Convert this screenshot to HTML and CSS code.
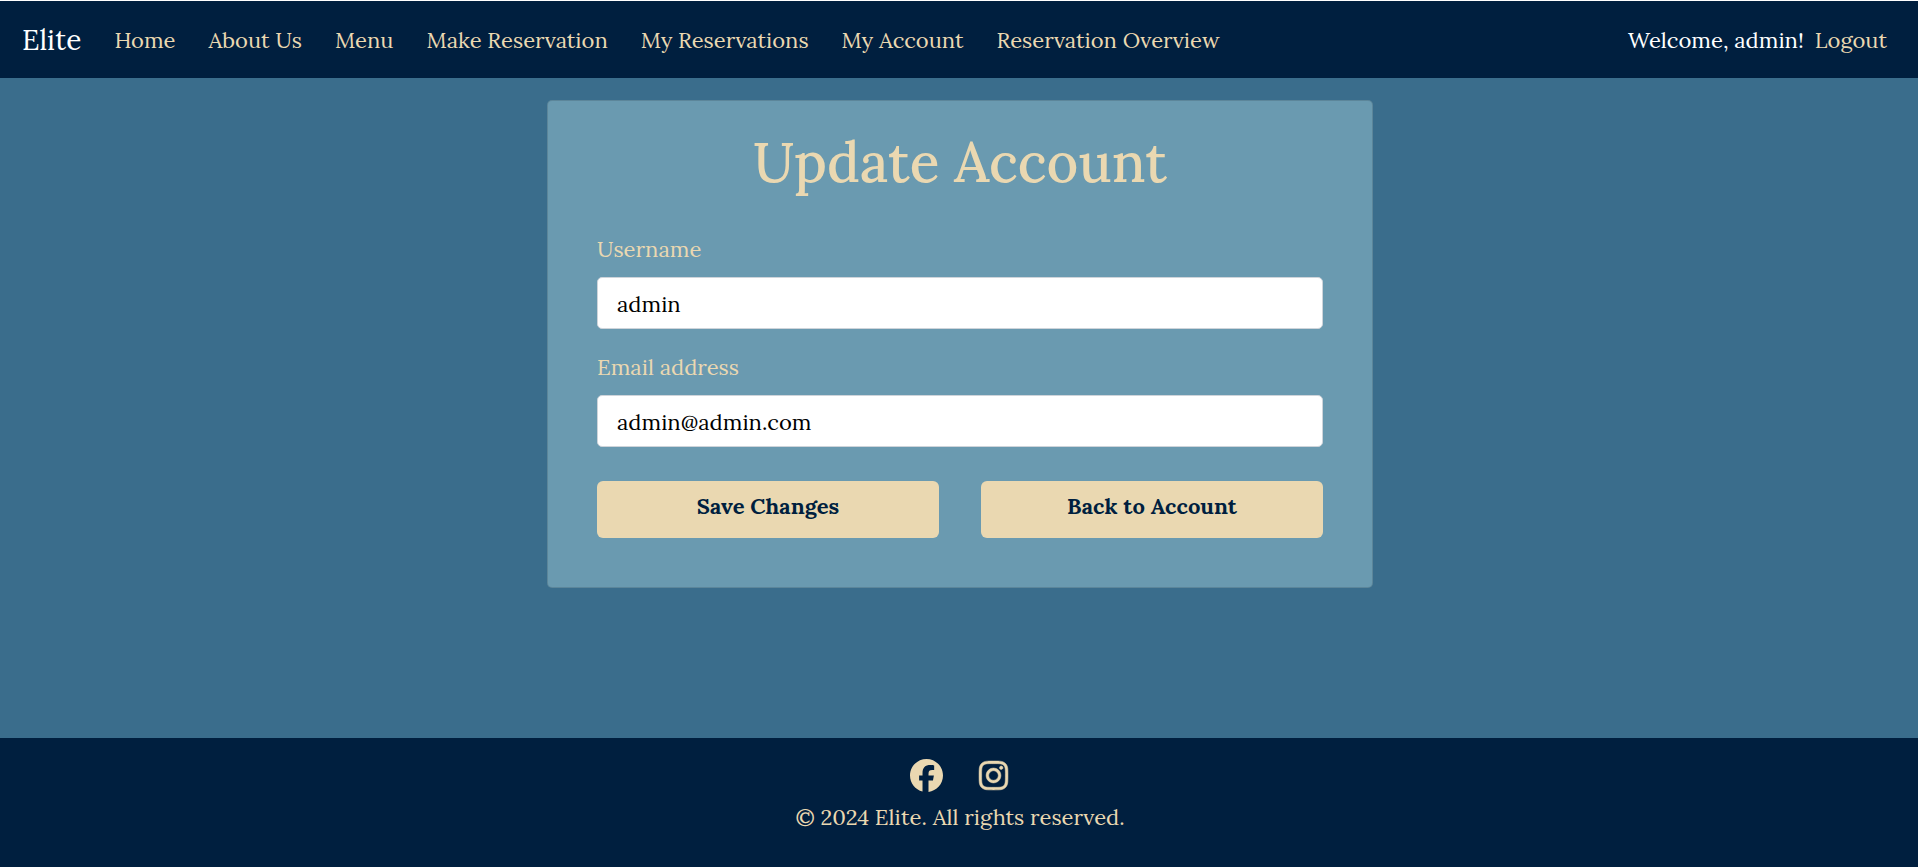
FILE: index.html
```html
<!DOCTYPE html>
<html lang="en">
<head>
<meta charset="utf-8">
<meta name="viewport" content="width=device-width, initial-scale=1">
<title>Elite - Update Account</title>
<link rel="stylesheet" href="styles.css">
</head>
<body>
<header class="navbar">
  <a class="brand" href="#">Elite</a>
  <nav class="nav-links">
    <a href="#">Home</a>
    <a href="#">About Us</a>
    <a href="#">Menu</a>
    <a href="#">Make Reservation</a>
    <a href="#">My Reservations</a>
    <a href="#">My Account</a>
    <a href="#">Reservation Overview</a>
  </nav>
  <div class="session">
    <span class="welcome">Welcome, admin!</span>
    <a href="#">Logout</a>
  </div>
</header>

<main class="main">
  <section class="card">
    <h1 class="card-title">Update Account</h1>
    <form class="form">
      <div class="field">
        <label for="username">Username</label>
        <input id="username" type="text" value="admin">
      </div>
      <div class="field">
        <label for="email">Email address</label>
        <input id="email" type="email" value="admin@admin.com">
      </div>
      <div class="actions">
        <button class="btn" type="submit">Save Changes</button>
        <a class="btn" href="#">Back to Account</a>
      </div>
    </form>
  </section>
</main>

<footer class="footer">
  <div class="social">
    <a href="#" aria-label="Facebook">
      <svg class="icon" viewBox="0 0 512 512" aria-hidden="true"><path d="M512 256C512 114.6 397.4 0 256 0S0 114.6 0 256C0 376 82.7 476.8 194.2 504.5V334.2H141.4V256h52.8V222.3c0-87.1 39.4-127.5 125-127.5c16.2 0 44.2 3.2 55.7 6.4V172c-6-.6-16.5-1-29.6-1c-42 0-58.2 15.9-58.2 57.2V256h83.6l-14.4 78.2H287V510.1C413.8 494.8 512 386.9 512 256z"/></svg>
    </a>
    <a href="#" aria-label="Instagram">
      <svg class="icon" viewBox="-32 0 512 512" aria-hidden="true"><path stroke="currentColor" stroke-width="8" d="M224.1 141c-63.6 0-114.9 51.3-114.9 114.9s51.3 114.9 114.9 114.9S339 319.5 339 255.9 287.7 141 224.1 141zm0 189.6c-41.1 0-74.7-33.5-74.7-74.7s33.5-74.7 74.7-74.7 74.7 33.5 74.7 74.7-33.6 74.7-74.7 74.7zm146.4-194.3c0 14.9-12 26.8-26.8 26.8-14.9 0-26.8-12-26.8-26.8s12-26.8 26.8-26.8 26.8 12 26.8 26.8zm76.1 27.2c-1.7-35.9-9.9-67.7-36.2-93.9-26.2-26.2-58-34.4-93.9-36.2-37-2.1-147.9-2.1-184.9 0-35.8 1.7-67.6 9.900-93.900 36.100s-34.400 58-36.200 93.900c-2.100 37-2.100 147.900 0 184.900 1.700 35.900 9.900 67.700 36.200 93.900s58 34.400 93.900 36.200c37 2.100 147.900 2.100 184.900 0 35.900-1.700 67.700-9.900 93.900-36.200 26.200-26.200 34.400-58 36.200-93.900 2.100-37 2.100-147.800 0-184.800zM398.800 388c-7.800 19.600-22.900 34.700-42.600 42.600-29.500 11.700-99.500 9-132.100 9s-102.700 2.600-132.100-9c-19.600-7.800-34.700-22.900-42.600-42.600-11.700-29.500-9-99.500-9-132.100s-2.600-102.700 9-132.100c7.800-19.600 22.900-34.700 42.600-42.600 29.500-11.700 99.500-9 132.100-9s102.700-2.600 132.100 9c19.600 7.800 34.700 22.900 42.600 42.600 11.700 29.500 9 99.500 9 132.100s2.700 102.700-9 132.100z"/></svg>
    </a>
  </div>
  <p class="copyright">© 2024 Elite. All rights reserved.</p>
</footer>
</body>
</html>
```
FILE: styles.css
```css
:root {
  --navy: #001f3f;
  --blue: #3a6d8c;
  --light-blue: #6a9ab0;
  --cream: #ead8b1;
}

*,
*::before,
*::after {
  box-sizing: border-box;
}

body {
  margin: 0;
  min-height: 100vh;
  display: flex;
  flex-direction: column;
  border-top: 1px solid #fff;
  background: var(--blue);
  color: var(--cream);
  font-family: Lora, "Liberation Serif", serif;
  font-size: 22px;
  line-height: 34px;
}

a {
  color: inherit;
  text-decoration: none;
}

.navbar {
  display: flex;
  flex-wrap: wrap;
  align-items: center;
  gap: 0 33px;
  min-height: 77px;
  padding: 0 31px 0 22px;
  background: var(--navy);
}

.brand {
  color: #fff;
  font-size: 28px;
}

.nav-links {
  display: flex;
  flex-wrap: wrap;
  gap: 0 33px;
}

.session {
  display: flex;
  gap: 11px;
  margin-left: auto;
}

.welcome {
  color: #fff;
}

.main {
  flex: 1;
  padding: 22px 14px 22px 16px;
}

.card {
  max-width: 826px;
  margin: 0 auto;
  padding: 23px 49px 49px;
  border: 1px solid rgba(0, 0, 0, 0.125);
  border-radius: 5px;
  background: var(--light-blue);
}

.card-title {
  margin: 0 0 32px;
  font-size: 55px;
  font-weight: 500;
  line-height: 76px;
  text-align: center;
}

.field {
  margin-bottom: 21px;
}

.field label {
  display: block;
  margin-bottom: 11px;
}

.field input {
  display: block;
  width: 100%;
  padding: 9px 19px 7px;
  border: 1px solid #ced4da;
  border-radius: 5px;
  background: #fff;
  color: #000;
  font: inherit;
}

.actions {
  display: grid;
  grid-template-columns: 1fr 1fr;
  gap: 42px;
  padding-top: 13px;
}

.btn {
  display: block;
  padding: 8px 16px 15px;
  border: 0;
  border-radius: 6px;
  background: var(--cream);
  color: var(--navy);
  font: inherit;
  font-weight: 700;
  text-align: center;
  cursor: pointer;
}

.footer {
  padding: 21px 14px 33px 16px;
  background: var(--navy);
  text-align: center;
}

.social {
  display: flex;
  justify-content: center;
  gap: 34px;
  margin-bottom: 8px;
}

.icon {
  display: block;
  width: 33px;
  height: 33px;
  fill: currentColor;
}

.copyright {
  margin: 0;
}
```
